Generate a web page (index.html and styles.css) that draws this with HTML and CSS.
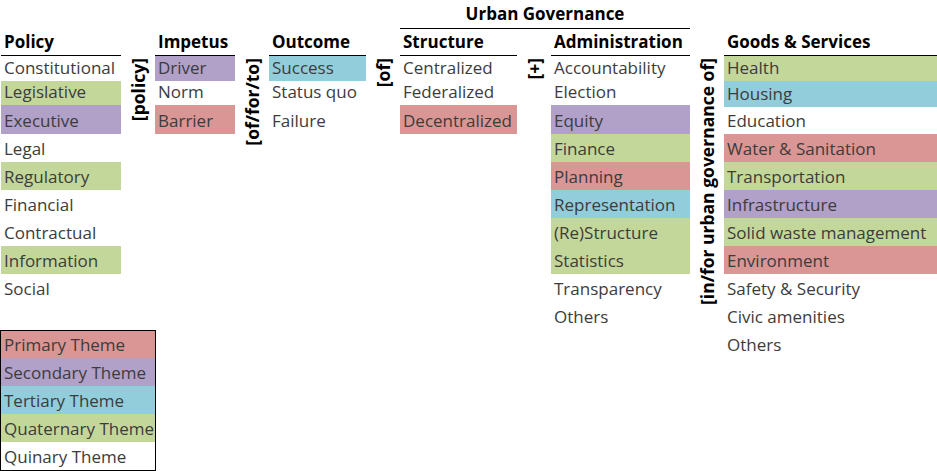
FILE: index.html
```html
<!DOCTYPE html>
<html>
<head>
<meta charset="utf-8">
<link rel="stylesheet" href="styles.css">
</head>
<body>
<div class="sheet">
  <div class="block">
    <div class="row">
      <div class="col w-policy">
        <div class="spacer"></div>
        <div class="hd">Policy</div>
        <div class="cell r1">Constitutional</div>
        <div class="cell r2 green">Legislative</div>
        <div class="cell r3 purple">Executive</div>
        <div class="cell">Legal</div>
        <div class="cell green">Regulatory</div>
        <div class="cell">Financial</div>
        <div class="cell">Contractual</div>
        <div class="cell green">Information</div>
        <div class="cell">Social</div>
      </div>
      <div class="join"><div class="vlabel">[policy]</div></div>
    </div>
    <div class="legend">
      <div class="cell l1 red">Primary Theme</div>
      <div class="cell purple">Secondary Theme</div>
      <div class="cell blue">Tertiary Theme</div>
      <div class="cell green">Quaternary Theme</div>
      <div class="cell l5">Quinary Theme</div>
    </div>
  </div>

  <div class="col w-impetus">
    <div class="spacer"></div>
    <div class="hd">Impetus</div>
    <div class="cell r1 purple">Driver</div>
    <div class="cell r2">Norm</div>
    <div class="cell r3 red">Barrier</div>
  </div>
  <div class="join"><div class="vlabel">[of/for/to]</div></div>

  <div class="col w-outcome">
    <div class="spacer"></div>
    <div class="hd">Outcome</div>
    <div class="cell r1 blue">Success</div>
    <div class="cell r2">Status quo</div>
    <div class="cell r3">Failure</div>
  </div>
  <div class="join"><div class="vlabel">[of]</div></div>

  <div class="group">
    <div class="group-title">Urban Governance</div>
    <div class="row">
      <div class="col w-structure">
        <div class="hd">Structure</div>
        <div class="cell r1">Centralized</div>
        <div class="cell r2">Federalized</div>
        <div class="cell r3 red">Decentralized</div>
      </div>
      <div class="join inner"><div class="vlabel">[+]</div></div>
      <div class="col w-admin">
        <div class="hd">Administration</div>
        <div class="cell r1">Accountability</div>
        <div class="cell r2">Election</div>
        <div class="cell r3 purple">Equity</div>
        <div class="cell green">Finance</div>
        <div class="cell red">Planning</div>
        <div class="cell blue">Representation</div>
        <div class="cell green">(Re)Structure</div>
        <div class="cell green">Statistics</div>
        <div class="cell">Transparency</div>
        <div class="cell">Others</div>
      </div>
    </div>
  </div>
  <div class="join"><div class="vlabel">[in/for urban governance of]</div></div>

  <div class="col w-goods">
    <div class="spacer"></div>
    <div class="hd">Goods &amp; Services</div>
    <div class="cell r1 green">Health</div>
    <div class="cell g2 blue">Housing</div>
    <div class="cell g3">Education</div>
    <div class="cell red">Water &amp; Sanitation</div>
    <div class="cell green">Transportation</div>
    <div class="cell purple">Infrastructure</div>
    <div class="cell green">Solid waste management</div>
    <div class="cell red">Environment</div>
    <div class="cell">Safety &amp; Security</div>
    <div class="cell">Civic amenities</div>
    <div class="cell">Others</div>
  </div>
</div>
</body>
</html>
```
FILE: styles.css
```css
html, body {
  margin: 0;
  padding: 0;
  background: #ffffff;
  overflow: hidden;
}
body {
  font-family: "Open Sans", "Noto Sans", sans-serif;
  font-size: 17px;
  color: #3c3c3c;
}
.sheet {
  display: flex;
  align-items: flex-start;
  padding-left: 1px;
  width: 937px;
  height: 471px;
  box-sizing: border-box;
}
.block {
  display: flex;
  flex-direction: column;
  width: 154px;
}
.row {
  display: flex;
  align-items: flex-start;
}
.col {
  display: flex;
  flex-direction: column;
}
.w-policy { width: 120px; }
.w-impetus { width: 80px; }
.w-outcome { width: 97px; }
.w-structure { width: 117px; }
.w-admin { width: 139px; }
.w-goods { width: 213px; }

.spacer { height: 29px; }

.hd {
  height: 27px;
  box-sizing: border-box;
  border-bottom: 1px solid #000;
  display: flex;
  align-items: flex-end;
  padding: 0 3px 2px;
  line-height: 23px;
  font-weight: 700;
  color: #000;
  white-space: nowrap;
}
.group {
  display: flex;
  flex-direction: column;
  width: 290px;
}
.group-title {
  height: 29px;
  box-sizing: border-box;
  border-bottom: 1px solid #000;
  display: flex;
  align-items: flex-end;
  justify-content: center;
  padding-bottom: 3px;
  line-height: 23px;
  font-weight: 700;
  color: #000;
}
.cell {
  height: 28px;
  box-sizing: border-box;
  display: flex;
  align-items: flex-end;
  padding: 0 3px 2px;
  line-height: 23px;
  white-space: nowrap;
}
.r1 { height: 25px; }
.r2 { height: 24px; }
.r3 { height: 29px; }
.g2 { height: 26px; }
.g3 { height: 27px; }

.red { background: #DA9694; }
.purple { background: #B1A0C7; }
.blue { background: #92CDDC; }
.green { background: #C4D79B; }

.join {
  width: 34px;
  flex: none;
  display: flex;
  justify-content: center;
  padding-top: 58px;
}
.join.inner { padding-top: 29px; }
.vlabel {
  writing-mode: vertical-rl;
  transform: rotate(180deg);
  font-weight: 700;
  font-size: 17.5px;
  color: #000;
  line-height: 23px;
  white-space: nowrap;
}

.legend {
  margin: 28px -1px 0 -1px;
  width: 156px;
  box-sizing: border-box;
  border: 1px solid #000;
  display: flex;
  flex-direction: column;
}
.legend .cell { padding-left: 3px; }
.legend .l1 { height: 27px; }
```
